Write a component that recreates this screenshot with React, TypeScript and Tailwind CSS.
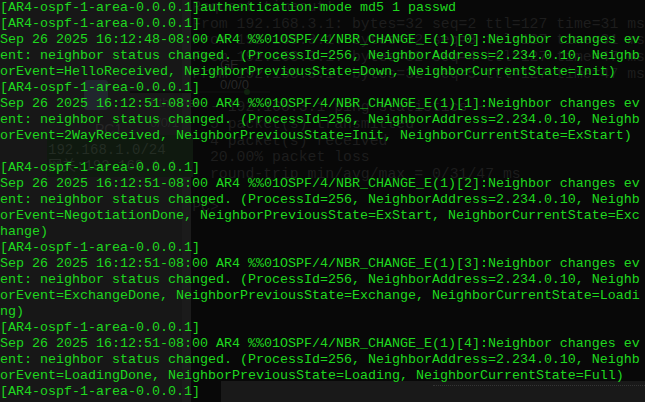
import React from "react";

const lines: string[] = [
  "[AR4-ospf-1-area-0.0.0.1]authentication-mode md5 1 passwd",
  "[AR4-ospf-1-area-0.0.0.1]",
  "Sep 26 2025 16:12:48-08:00 AR4 %%01OSPF/4/NBR_CHANGE_E(1)[0]:Neighbor changes ev",
  "ent: neighbor status changed. (ProcessId=256, NeighborAddress=2.234.0.10, Neighb",
  "orEvent=HelloReceived, NeighborPreviousState=Down, NeighborCurrentState=Init)",
  "[AR4-ospf-1-area-0.0.0.1]",
  "Sep 26 2025 16:12:51-08:00 AR4 %%01OSPF/4/NBR_CHANGE_E(1)[1]:Neighbor changes ev",
  "ent: neighbor status changed. (ProcessId=256, NeighborAddress=2.234.0.10, Neighb",
  "orEvent=2WayReceived, NeighborPreviousState=Init, NeighborCurrentState=ExStart)",
  "",
  "[AR4-ospf-1-area-0.0.0.1]",
  "Sep 26 2025 16:12:51-08:00 AR4 %%01OSPF/4/NBR_CHANGE_E(1)[2]:Neighbor changes ev",
  "ent: neighbor status changed. (ProcessId=256, NeighborAddress=2.234.0.10, Neighb",
  "orEvent=NegotiationDone, NeighborPreviousState=ExStart, NeighborCurrentState=Exc",
  "hange)",
  "[AR4-ospf-1-area-0.0.0.1]",
  "Sep 26 2025 16:12:51-08:00 AR4 %%01OSPF/4/NBR_CHANGE_E(1)[3]:Neighbor changes ev",
  "ent: neighbor status changed. (ProcessId=256, NeighborAddress=2.234.0.10, Neighb",
  "orEvent=ExchangeDone, NeighborPreviousState=Exchange, NeighborCurrentState=Loadi",
  "ng)",
  "[AR4-ospf-1-area-0.0.0.1]",
  "Sep 26 2025 16:12:51-08:00 AR4 %%01OSPF/4/NBR_CHANGE_E(1)[4]:Neighbor changes ev",
  "ent: neighbor status changed. (ProcessId=256, NeighborAddress=2.234.0.10, Neighb",
  "orEvent=LoadingDone, NeighborPreviousState=Loading, NeighborCurrentState=Full)",
  "[AR4-ospf-1-area-0.0.0.1]",
];

const ghost: string[] = [
  "Request timeout!",
  "From 192.168.3.1: bytes=32 seq=2 ttl=127 time=31 ms",
  "From 192.168.3.1: bytes=32 seq=3 ttl=127 time=31 ms",
  "From 192.168.3.1: bytes=32 seq=4 ttl=127 time=47 ms",
  "From 192.168.3.1: bytes=32 seq=5 ttl=127 time=47 ms",
  "",
  "--- 192.168.3.1 ping statistics ---",
  "  5 packet(s) transmitted",
  "  4 packet(s) received",
  "  20.00% packet loss",
  "  round-trip min/avg/max = 0/31/47 ms",
  "",
  "PC>",
];

export default function App() {
  return (
    <div className="relative w-[645px] h-[402px] overflow-hidden bg-[#080808]">
      {/* faded window behind the terminal */}
      <div className="absolute inset-0 flex">
        <div className="relative w-[277px] h-full bg-[#171717]">
          <div className="absolute left-[84px] top-[80px] w-[24px] h-[30px] rounded-[3px] bg-[#20262d]" />
          <div className="absolute left-[220px] top-[55px] font-['Liberation_Sans',sans-serif] text-[13px] text-[#272727]">
            GE 0/0/0
          </div>
          <div className="absolute left-[130px] top-[91px] w-[140px] h-[2px] bg-[#0c0c0c]" />
          <div className="absolute left-[244px] top-[89px] w-[6px] h-[6px] rounded-full bg-[#10220f]" />
          <div className="absolute left-[150px] top-[93px] font-['Liberation_Sans',sans-serif] text-[13px] text-[#252525]">
            Ethernet 0/0/1
          </div>
          <div className="absolute left-[95px] top-[119px] font-['Liberation_Sans',sans-serif] text-[14px] text-[#272727]">
            PC1
          </div>
          <div className="absolute left-[47px] top-[135px] w-[146px] h-[42px] bg-[#0f190f] px-[1px] pt-[7px] font-['Liberation_Mono','Noto_Sans_CJK_SC',monospace] text-[14px] leading-[16px] text-[#232c23]">
            <div>192.168.1.0/24</div>
            <div>网关:192.168.1.1</div>
          </div>
        </div>
        <div className="w-[14px] h-full bg-[#1b1b1b]" />
        <div className="flex-1 h-full flex flex-col bg-[#080808]">
          <div className="-mt-[1px] pl-[1px] whitespace-pre font-['Liberation_Mono',monospace] text-[14.8px] leading-[16.7px] text-[#1d1d1d]">
            {ghost.map((g, i) => (
              <div key={i} className="h-[16.7px]">
                {g}
              </div>
            ))}
          </div>
          <div className="mt-auto ml-[30px] h-[21px] bg-[#191919] pt-[4px]">
            <div className="ml-[212px] border-t border-dotted border-[#343434]" />
          </div>
        </div>
      </div>

      {/* terminal output */}
      <div className="absolute inset-0 whitespace-pre font-['Liberation_Mono',monospace] text-[13.33px] leading-[16px] text-[#1fd81f]">
        {lines.map((l, i) => (
          <div key={i} className="h-[16px]">
            {l}
          </div>
        ))}
      </div>
    </div>
  );
}
